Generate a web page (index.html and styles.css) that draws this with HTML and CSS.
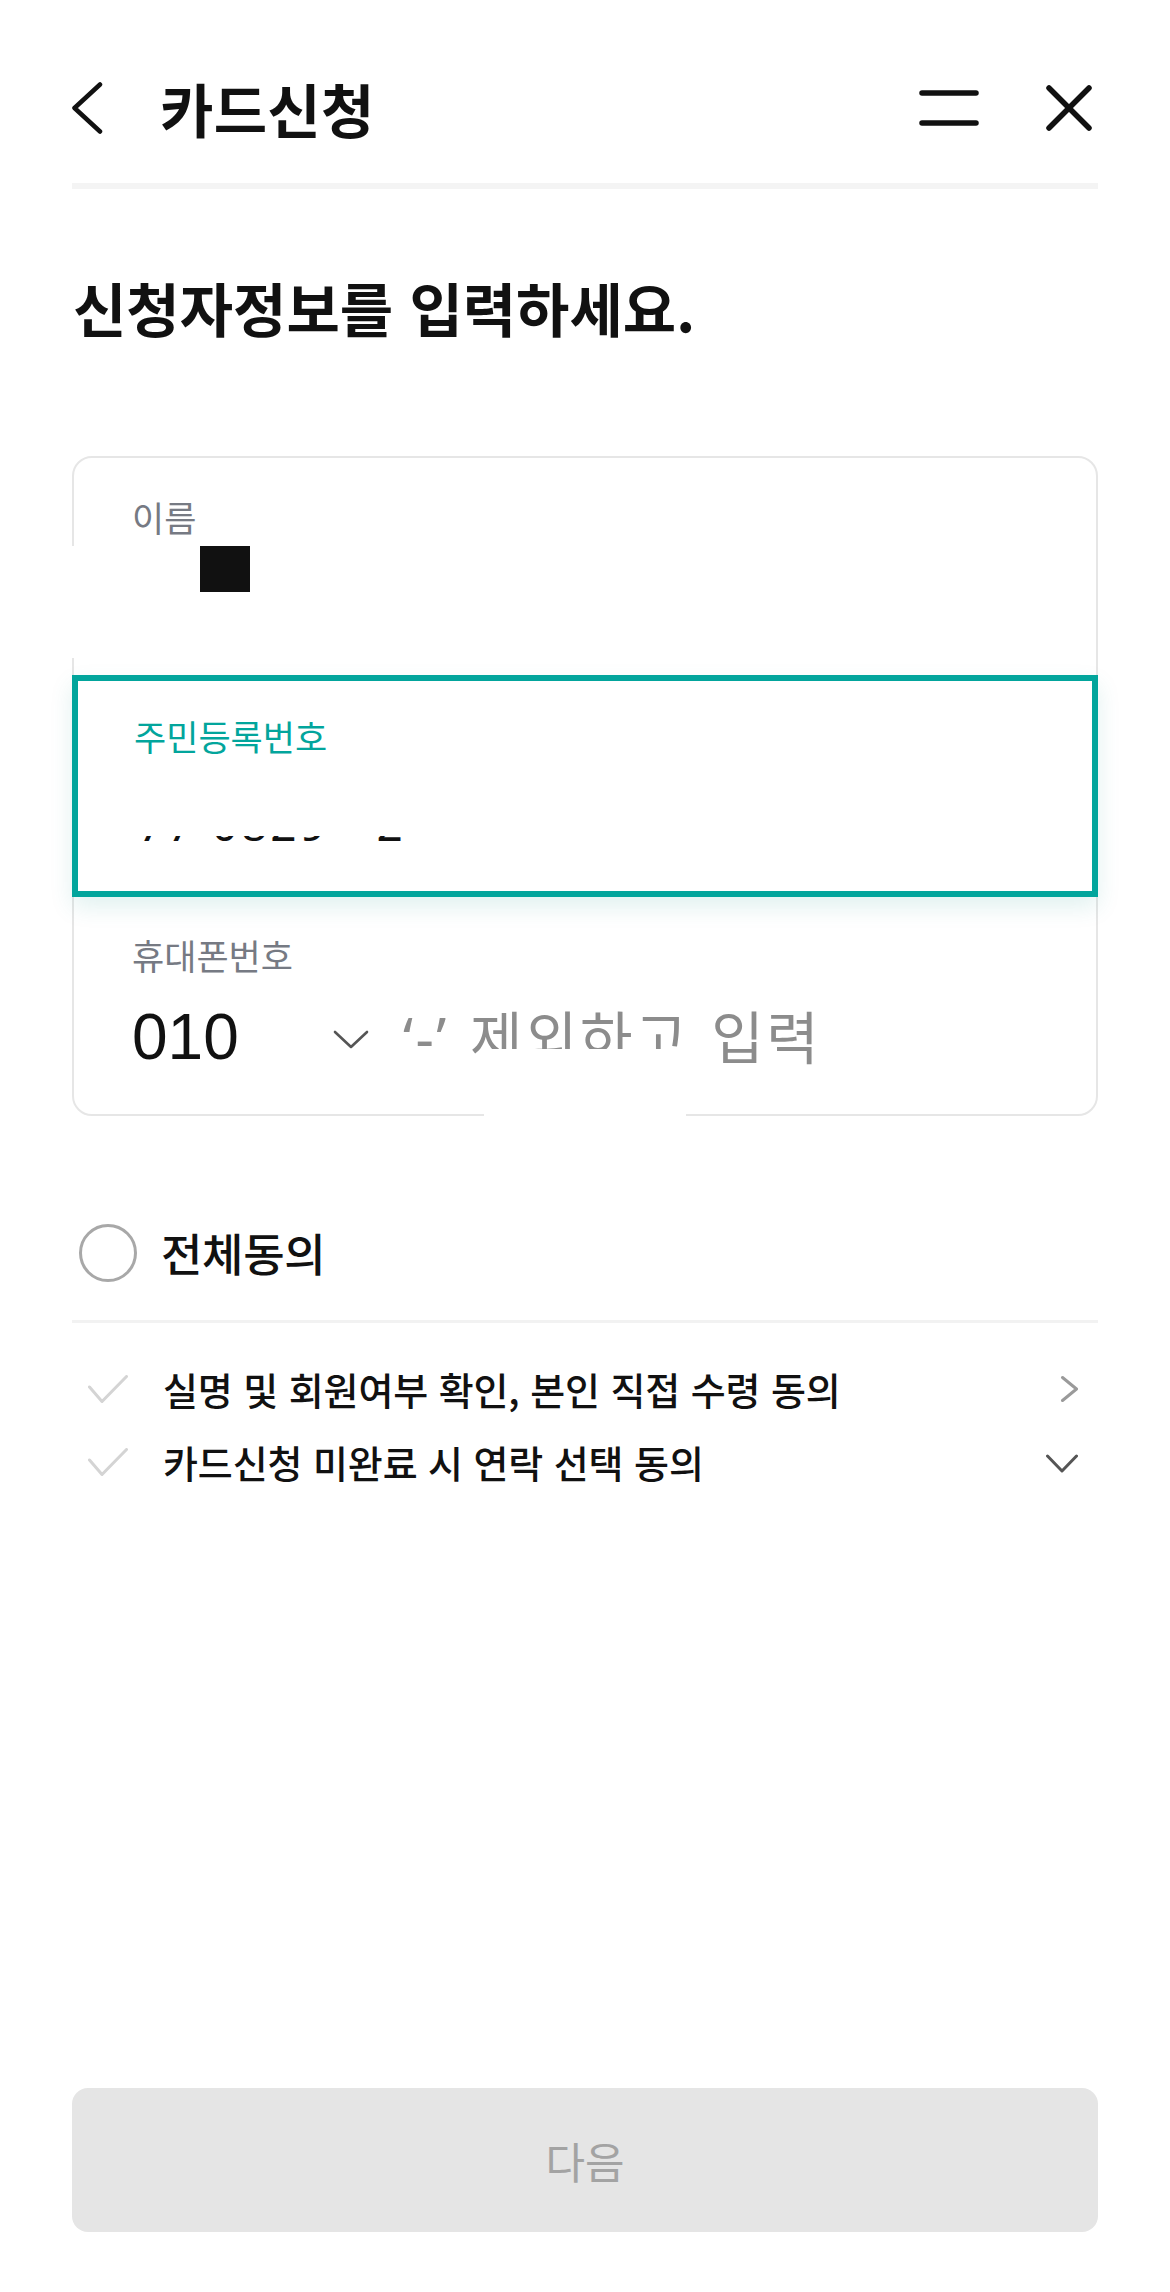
FILE: index.html
```html
<!DOCTYPE html>
<html lang="ko">
<head>
<meta charset="utf-8">
<title>카드신청</title>
<link rel="stylesheet" href="styles.css">
</head>
<body>
<div class="page">
  <header class="topbar">
    <div class="topbar-left">
      <svg class="icon-back" width="34" height="56" viewBox="0 0 34 56"><polyline points="28,4.5 2.5,28 28,51.5" fill="none" stroke="#111" stroke-width="4.5" stroke-linecap="round" stroke-linejoin="round"/></svg>
      <h1 class="title">카드신청</h1>
    </div>
    <div class="topbar-right">
      <svg class="icon-menu" width="62" height="40" viewBox="0 0 62 40"><line x1="4" y1="5" x2="58" y2="5" stroke="#111" stroke-width="5.5" stroke-linecap="round"/><line x1="4" y1="35" x2="58" y2="35" stroke="#111" stroke-width="5.5" stroke-linecap="round"/></svg>
      <svg class="icon-close" width="50" height="50" viewBox="0 0 50 50"><line x1="5" y1="5" x2="45" y2="45" stroke="#111" stroke-width="5.5" stroke-linecap="round"/><line x1="45" y1="5" x2="5" y2="45" stroke="#111" stroke-width="5.5" stroke-linecap="round"/></svg>
    </div>
  </header>
  <div class="divider-thick"></div>

  <h2 class="heading">신청자정보를 입력하세요.</h2>

  <div class="form-box">
    <div class="field field-name">
      <div class="label">이름</div>
      <div class="value-row"><span class="mask"></span></div>
    </div>
    <div class="field field-active">
      <div class="label label-active">주민등록번호</div>
      <div class="rrn-clip"><div class="rrn-text">77 0829 - 2</div></div>
    </div>
    <div class="field field-phone">
      <div class="label">휴대폰번호</div>
      <div class="phone-row">
        <span class="code">010</span>
        <svg class="icon-select" width="36" height="20" viewBox="0 0 36 20"><polyline points="2,3 18,18 34,3" fill="none" stroke="#555" stroke-width="2.6" stroke-linecap="round" stroke-linejoin="round"/></svg>
        <span class="placeholder">‘-’ 제외하고 입력</span>
      </div>
    </div>
    <span class="patch patch-left"></span>
    <span class="patch patch-bottom"></span>
  </div>

  <div class="agree-all">
    <span class="radio"></span>
    <span class="agree-all-text">전체동의</span>
  </div>
  <div class="divider-thin"></div>

  <ul class="terms">
    <li class="term">
      <svg class="icon-check" width="40" height="28" viewBox="0 0 40 28"><polyline points="1.5,12 14,26.5 38.5,1.5" fill="none" stroke="#d4d4d4" stroke-width="3" stroke-linecap="round" stroke-linejoin="round"/></svg>
      <span class="term-text">실명 및 회원여부 확인, 본인 직접 수령 동의</span>
      <svg class="icon-arrow" width="36" height="30" viewBox="0 0 36 30"><polyline points="20.5,3.5 34.5,15 20.5,26.5" fill="none" stroke="#9a9a9a" stroke-width="3" stroke-linecap="round" stroke-linejoin="round"/></svg>
    </li>
    <li class="term">
      <svg class="icon-check" width="40" height="28" viewBox="0 0 40 28"><polyline points="1.5,12 14,26.5 38.5,1.5" fill="none" stroke="#d4d4d4" stroke-width="3" stroke-linecap="round" stroke-linejoin="round"/></svg>
      <span class="term-text">카드신청 미완료 시 연락 선택 동의</span>
      <svg class="icon-arrow" width="36" height="30" viewBox="0 0 36 30"><polyline points="5.5,9 20,24 34.5,9" fill="none" stroke="#555" stroke-width="3" stroke-linecap="round" stroke-linejoin="round"/></svg>
    </li>
  </ul>

  <button class="next-btn" type="button">다음</button>
</div>
</body>
</html>
```

FILE: styles.css
```css
* {
  box-sizing: border-box;
}

html, body {
  margin: 0;
  padding: 0;
  background: #fff;
}

body {
  font-family: "Noto Sans CJK KR", "Noto Sans", sans-serif;
  color: #111;
}

.page {
  height: 2292px;
  padding: 0 72px;
  display: flex;
  flex-direction: column;
  overflow: hidden;
}

/* header */
.topbar {
  padding-top: 50px;
  height: 165px;
  display: flex;
  align-items: center;
  justify-content: space-between;
}

.topbar-left {
  display: flex;
  align-items: center;
  height: 115px;
}

.icon-back {
  display: block;
}

.title {
  margin: 0 0 0 54px;
  font-size: 58px;
  line-height: 56px;
  font-weight: 700;
  letter-spacing: 0.3px;
  color: #111;
}

.topbar-right {
  display: flex;
  align-items: center;
  height: 115px;
  gap: 64px;
  padding-right: 4px;
}

.icon-menu,
.icon-close {
  display: block;
}

.divider-thick {
  margin-top: 18px;
  height: 6px;
  background: #f4f4f4;
  flex-shrink: 0;
}

/* heading */
.heading {
  margin: 90px 0 0 0;
  font-size: 58px;
  line-height: 56px;
  font-weight: 700;
  letter-spacing: 0;
  color: #111;
  padding-left: 1px;
}

/* form */
.form-box {
  position: relative;
  margin-top: 121px;
  border: 2px solid #e6e6e6;
  border-radius: 20px;
  flex-shrink: 0;
}

.field {
  padding-left: 58px;
}

.label {
  font-size: 35px;
  line-height: 32px;
  color: #767a83;
  letter-spacing: 0;
}

.field-name {
  padding-top: 43px;
  padding-bottom: 83px;
}

.value-row {
  margin-top: 13px;
  height: 46px;
  display: flex;
}

.mask {
  display: block;
  width: 50px;
  height: 46px;
  margin-left: 68px;
  background: #111;
}

.field-active {
  position: relative;
  z-index: 1;
  margin: 0 -2px;
  border: 6px solid #02a59c;
  padding: 39px 0 49px 56px;
  background: #fff;
  box-shadow: 0 10px 22px rgba(0, 140, 130, 0.12);
}

.label-active {
  color: #02a59c;
}

.rrn-clip {
  margin-top: 84px;
  height: 6px;
  overflow: hidden;
}

.rrn-text {
  margin-top: -36px;
  margin-left: 4px;
  font-family: "Noto Sans", sans-serif;
  font-size: 46px;
  line-height: 46px;
  letter-spacing: 3px;
  color: #111;
  white-space: pre;
}

.field-phone {
  padding-top: 42px;
  padding-bottom: 42px;
}

.phone-row {
  margin-top: 31px;
  height: 70px;
  display: flex;
  align-items: center;
}

.code {
  width: 201px;
  font-family: "Liberation Sans", sans-serif;
  font-size: 64px;
  line-height: 70px;
  color: #111;
  flex-shrink: 0;
}

.icon-select {
  display: block;
  flex-shrink: 0;
  margin-top: 3px;
}

.placeholder {
  margin-left: 34px;
  font-family: "Noto Sans", "Noto Sans CJK KR", sans-serif;
  font-size: 57px;
  line-height: 70px;
  color: #8c8c8c;
  letter-spacing: 2.5px;
  word-spacing: 4px;
  white-space: nowrap;
}

.patch {
  position: absolute;
  z-index: 2;
  background: #fff;
}

.patch-left {
  left: -3px;
  top: 88px;
  width: 8px;
  height: 112px;
}

.patch-bottom {
  left: 410px;
  top: 591px;
  width: 202px;
  height: 70px;
}

/* agreements */
.agree-all {
  margin-top: 108px;
  height: 58px;
  display: flex;
  align-items: center;
  flex-shrink: 0;
}

.radio {
  display: block;
  width: 58px;
  height: 58px;
  margin-left: 7px;
  border: 3px solid #a8a8a8;
  border-radius: 50%;
  flex-shrink: 0;
}

.agree-all-text {
  margin-left: 24px;
  font-size: 45px;
  line-height: 58px;
  font-weight: 500;
  letter-spacing: -0.3px;
  color: #111;
}

.divider-thin {
  margin-top: 38px;
  height: 3px;
  background: #f2f2f2;
  flex-shrink: 0;
}

.terms {
  list-style: none;
  margin: 41px 0 0 0;
  padding: 0;
  display: flex;
  flex-direction: column;
  gap: 23px;
}

.term {
  height: 50px;
  display: flex;
  align-items: center;
}

.icon-check {
  display: block;
  margin-left: 16px;
  flex-shrink: 0;
}

.term-text {
  flex: 1;
  margin-left: 35px;
  font-size: 38px;
  line-height: 50px;
  font-weight: 500;
  letter-spacing: -0.1px;
  color: #111;
  white-space: nowrap;
}

.icon-arrow {
  display: block;
  margin-right: 20px;
  flex-shrink: 0;
}

/* button */
.next-btn {
  margin-top: auto;
  margin-bottom: 60px;
  width: 100%;
  height: 144px;
  border: none;
  border-radius: 16px;
  background: #e5e5e5;
  font-family: "Noto Sans CJK KR", sans-serif;
  font-size: 43px;
  color: #a3a3a3;
  padding: 0;
  flex-shrink: 0;
}
```
